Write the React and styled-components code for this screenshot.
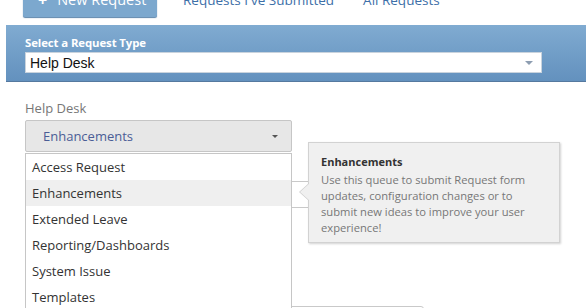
import React from 'react';
import styled, { createGlobalStyle } from 'styled-components';

const GlobalStyle = createGlobalStyle`
  html, body {
    margin: 0;
    padding: 0;
    background: #fff;
    overflow: hidden;
  }
  body {
    font-family: "Open Sans", "Liberation Sans", sans-serif;
  }
`

const Page = styled.div`
  width: 586px;
  height: 308px;
  overflow: hidden;
`

const Nav = styled.div`
  display: flex;
  align-items: center;
  height: 34px;
  margin-top: -17px;
  padding-left: 23px;
`

const NewButton = styled.div`
  width: 134px;
  height: 34px;
  box-sizing: border-box;
  display: flex;
  align-items: flex-end;
  padding: 0 0 8px 15px;
  background: #7ca8ce;
  border-radius: 2px;
  box-shadow: 0 1px 1px #5d85ab;
  color: #fff;
  font-size: 14.5px;
  line-height: 18px;
`

const Plus = styled.span`
  font-weight: 700;
  font-size: 16px;
  margin-right: 10px;
`

const Tab = styled.div`
  align-self: flex-end;
  padding-bottom: 8px;
  margin-left: ${p => p.$gap}px;
  color: #3d6fa8;
  font-size: 13.5px;
  line-height: 18px;
`

const Panel = styled.div`
  margin: 8px 0 0 6px;
  height: 57px;
  box-sizing: border-box;
  padding: 11px 0 0 19px;
  background: linear-gradient(#80abd1, #6391be);
  border-bottom: 1px solid #55799f;
`

const PanelLabel = styled.div`
  color: #fff;
  font-weight: 700;
  font-size: 11.4px;
  line-height: 13px;
  letter-spacing: -0.1px;
`

const TypeSelect = styled.div`
  margin-top: 3px;
  width: 517px;
  height: 21px;
  box-sizing: border-box;
  display: flex;
  align-items: center;
  justify-content: space-between;
  padding: 0 8px 0 4px;
  background: #fff;
  border: 1px solid #c9d3dd;
  font-family: "Liberation Sans", Arial, sans-serif;
  font-size: 14px;
  color: #111;
`

const Caret = styled.span`
  width: 0;
  height: 0;
  border-left: ${p => p.$w}px solid transparent;
  border-right: ${p => p.$w}px solid transparent;
  border-top: ${p => p.$h}px solid ${p => p.$color};
`

const Form = styled.div`
  padding: 18px 0 0 25px;
`

const FieldLabel = styled.div`
  color: #777;
  font-size: 13px;
  line-height: 16px;
`

const Combo = styled.div`
  position: relative;
  margin-top: 4px;
  width: 267px;
`

const ComboButton = styled.div`
  height: 32px;
  box-sizing: border-box;
  display: flex;
  align-items: center;
  justify-content: space-between;
  padding: 0 13px 0 17px;
  background: #e7e7e7;
  border: 1px solid #c6c6c6;
  border-radius: 2px;
  color: #4b5d96;
  font-size: 13px;
`

const Menu = styled.div`
  position: absolute;
  z-index: 2;
  top: 33px;
  left: 0;
  width: 267px;
  box-sizing: border-box;
  background: #fff;
  border: 1px solid #c6c6c6;
  border-bottom: none;
`

const Option = styled.div`
  height: 26px;
  display: flex;
  align-items: center;
  padding-left: 6px;
  background: ${p => (p.$active ? '#efefef' : '#fff')};
  color: #333;
  font-size: 13px;
`

const Field = styled.div`
  margin-top: ${p => p.$top}px;
  width: ${p => p.$width}px;
  height: 27px;
  box-sizing: border-box;
  border: 1px solid #c9c9c9;
  border-radius: 3px;
`

const Tooltip = styled.div`
  position: absolute;
  z-index: 3;
  top: 22px;
  left: 283px;
  width: 252px;
  box-sizing: border-box;
  padding: 12px 10px 6px 12px;
  background: #f0f0f0;
  border: 1px solid #d2d2d2;
  box-shadow: 1px 1px 2px rgba(0, 0, 0, 0.18);

  &::before,
  &::after {
    content: '';
    position: absolute;
    top: 40px;
    width: 0;
    height: 0;
    border-top: 9px solid transparent;
    border-bottom: 9px solid transparent;
  }
  &::before {
    left: -10px;
    border-right: 10px solid #cfcfcf;
  }
  &::after {
    left: -9px;
    border-right: 10px solid #f0f0f0;
  }
`

const TipTitle = styled.div`
  color: #333;
  font-weight: 700;
  font-size: 11px;
  line-height: 14px;
`

const TipBody = styled.div`
  margin-top: 3px;
  color: #777;
  font-size: 11.2px;
  line-height: 16px;
`

const options = [
  'Access Request',
  'Enhancements',
  'Extended Leave',
  'Reporting/Dashboards',
  'System Issue',
  'Templates',
];

export default function App() {
  return (
    <Page>
      <GlobalStyle />
      <Nav>
        <NewButton>
          <Plus>+</Plus>New Request
        </NewButton>
        <Tab $gap={26}>Requests I've Submitted</Tab>
        <Tab $gap={29}>All Requests</Tab>
      </Nav>

      <Panel>
        <PanelLabel>Select a Request Type</PanelLabel>
        <TypeSelect>
          Help Desk
          <Caret $w={4} $h={4} $color="#8d9db1" />
        </TypeSelect>
      </Panel>

      <Form>
        <FieldLabel>Help Desk</FieldLabel>
        <Combo>
          <ComboButton>
            Enhancements
            <Caret $w={3} $h={3} $color="#555" />
          </ComboButton>
          <Menu>
            {options.map(o => (
              <Option key={o} $active={o === 'Enhancements'}>{o}</Option>
            ))}
          </Menu>
          <Tooltip>
            <TipTitle>Enhancements</TipTitle>
            <TipBody>
              Use this queue to submit Request form<br />
              updates, configuration changes or to<br />
              submit new ideas to improve your user<br />
              experience!
            </TipBody>
          </Tooltip>
          <Field $top={29} $width={395} />
          <Field $top={98} $width={399} />
        </Combo>
      </Form>
    </Page>
  );
}
